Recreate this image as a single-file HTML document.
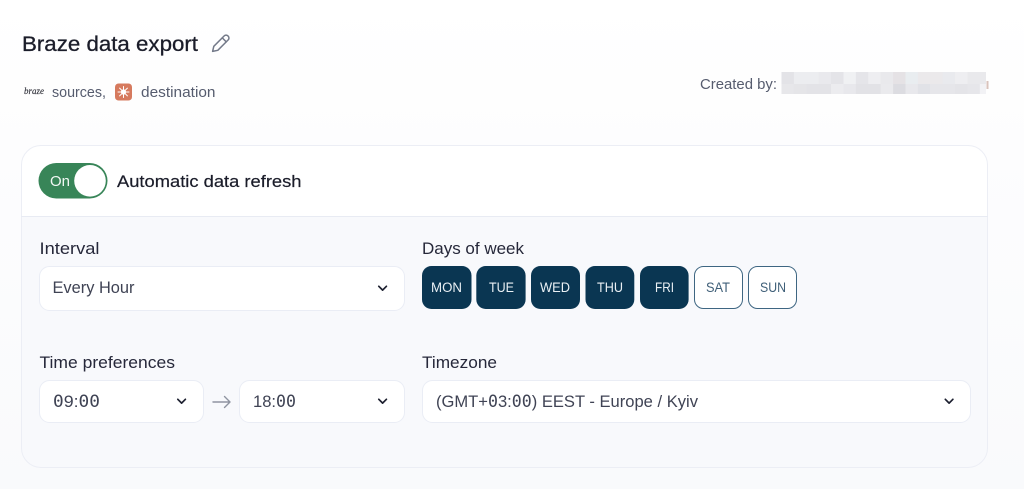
<!DOCTYPE html>
<html><head><meta charset="utf-8"><style>
html,body{margin:0;padding:0;width:1024px;height:489px;overflow:hidden;background:#fff}
svg{display:block}
text{font-family:"Liberation Sans",sans-serif}
.z{font-family:"DejaVu Sans Mono",monospace}
</style></head><body>
<svg width="1024" height="489" viewBox="0 0 1024 489" xmlns="http://www.w3.org/2000/svg">
<defs><linearGradient id="bg" x1="0" y1="0" x2="0" y2="1"><stop offset="0" stop-color="#fff"/><stop offset=".3" stop-color="#fdfdfe"/><stop offset="1" stop-color="#f9fafc"/></linearGradient></defs>
<rect width="1024" height="489" fill="url(#bg)"/>

<text x="22" y="51" font-size="21.5" fill="#1b1d2a" stroke="#1b1d2a" stroke-width=".3" textLength="176" lengthAdjust="spacingAndGlyphs">Braze data export</text>
<g fill="none" stroke="#737989" stroke-width="1.5" stroke-linejoin="round" stroke-linecap="round">
<path d="M212.6 51.4 L213.8 46.3 L224.2 35.9 A2.6 2.6 0 0 1 227.9 35.9 L228.2 36.2 A2.6 2.6 0 0 1 228.2 39.9 L217.8 50.3 Z"/>
<path d="M222.3 37.9 L226.2 41.8"/>
</g>

<text x="24" y="94" font-size="9.5" font-style="italic" fill="#33343c" style="font-family:'Liberation Serif',serif" stroke="#33343c" stroke-width=".15" textLength="20" lengthAdjust="spacingAndGlyphs">braze</text>
<text x="52" y="97" font-size="15" fill="#565c6e" textLength="54" lengthAdjust="spacingAndGlyphs">sources,</text>
<rect x="115" y="83.5" width="17" height="17" rx="3.5" fill="#d67a5e"/>
<g stroke="#fff" stroke-width="1" stroke-linecap="round">
<path d="M123.5 86.5V97.5M118 92H129M119.6 88.1L127.4 95.9M127.4 88.1L119.6 95.9"/>
</g>
<circle cx="123.5" cy="92" r="2.6" fill="#fff"/>
<text x="141" y="97" font-size="15" fill="#565c6e" textLength="74.5" lengthAdjust="spacingAndGlyphs">destination</text>

<text x="700" y="89" font-size="15" fill="#565c6e" textLength="77" lengthAdjust="spacingAndGlyphs">Created by:</text>
<g>
<rect x="781.5" y="72" width="204.5" height="22" fill="#e9e9ec"/>
<rect x="781.5" y="72" width="12.4" height="12" fill="#e3e3e7"/>
<rect x="793.9" y="72" width="24.8" height="12" fill="#ecedf0"/>
<rect x="818.7" y="72" width="12.4" height="12" fill="#e9e9ed"/>
<rect x="831.1" y="72" width="12.4" height="12" fill="#e4e4e8"/>
<rect x="843.5" y="72" width="12.4" height="12" fill="#f0f1f3"/>
<rect x="855.9" y="72" width="12.4" height="12" fill="#e5e5e9"/>
<rect x="868.3" y="72" width="12.4" height="12" fill="#eeeef1"/>
<rect x="880.7" y="72" width="12.4" height="12" fill="#e9e9ec"/>
<rect x="893.1" y="72" width="12.4" height="12" fill="#e5e2e5"/>
<rect x="905.5" y="72" width="12.4" height="12" fill="#e9edf0"/>
<rect x="917.9" y="72" width="24.8" height="12" fill="#ebe9eb"/>
<rect x="942.7" y="72" width="12.4" height="12" fill="#e9eaee"/>
<rect x="955.1" y="72" width="12.4" height="12" fill="#eeeef1"/>
<rect x="781.5" y="84" width="12.4" height="10" fill="#e7e7ea"/>
<rect x="793.9" y="84" width="12.4" height="10" fill="#e5e5e8"/>
<rect x="806.3" y="84" width="24.8" height="10" fill="#e3e3e7"/>
<rect x="831.1" y="84" width="12.4" height="10" fill="#ececef"/>
<rect x="843.5" y="84" width="12.4" height="10" fill="#e8e8ec"/>
<rect x="855.9" y="84" width="24.8" height="10" fill="#e2e2e6"/>
<rect x="880.7" y="84" width="12.4" height="10" fill="#eaeaed"/>
<rect x="893.1" y="84" width="12.4" height="10" fill="#dcdce1"/>
<rect x="905.5" y="84" width="12.4" height="10" fill="#e8e8ec"/>
<rect x="917.9" y="84" width="12.4" height="10" fill="#e1e2e7"/>
<rect x="930.3" y="84" width="24.8" height="10" fill="#e6e6ea"/>
<rect x="955.1" y="84" width="12.4" height="10" fill="#e4e4e8"/>
<rect x="967.5" y="84" width="12.4" height="10" fill="#e6e6ea"/>
<rect x="979.9" y="84" width="6.1" height="10" fill="#f2f2f5"/>
<rect x="986.5" y="81" width="2" height="8" fill="#c9a9a0" opacity=".7"/>
</g>

<path d="M21.5 216.5V165A19.5 19.5 0 0 1 41 145.5H968A19.5 19.5 0 0 1 987.5 165V216.5Z" fill="#fff"/>
<path d="M21.5 216.5V448A19.5 19.5 0 0 0 41 467.5H968A19.5 19.5 0 0 0 987.5 448V216.5Z" fill="#f8f9fc"/>
<rect x="21.5" y="145.5" width="966" height="322" rx="19.5" fill="none" stroke="#eceef5"/>
<path d="M21 216.5H988" stroke="#e8ebf3"/>

<rect x="38.5" y="163" width="69" height="35.5" rx="17.75" fill="#388558"/>
<circle cx="90" cy="180.8" r="15.8" fill="#fff"/>
<text x="50" y="186" font-size="15" fill="#f2f7f4" textLength="20" lengthAdjust="spacingAndGlyphs">On</text>
<text x="117" y="187" font-size="17" fill="#1b1d2a" stroke="#1b1d2a" stroke-width=".2" textLength="184.5" lengthAdjust="spacingAndGlyphs">Automatic data refresh</text>

<text x="39.5" y="254" font-size="17" fill="#26283a" textLength="60" lengthAdjust="spacingAndGlyphs">Interval</text>
<text x="422" y="254" font-size="17" fill="#26283a" textLength="102" lengthAdjust="spacingAndGlyphs">Days of week</text>
<text x="39.5" y="368" font-size="17" fill="#26283a" textLength="135.5" lengthAdjust="spacingAndGlyphs">Time preferences</text>
<text x="422" y="368" font-size="17" fill="#26283a" textLength="75" lengthAdjust="spacingAndGlyphs">Timezone</text>

<g fill="#fff" stroke="#eaedf5">
<rect x="39.5" y="266.5" width="365" height="44" rx="10"/>
<rect x="39.5" y="380.5" width="164" height="42" rx="10"/>
<rect x="239.5" y="380.5" width="165" height="42" rx="10"/>
<rect x="422.5" y="380.5" width="548" height="42" rx="10"/>
</g>
<text x="52.5" y="293" font-size="17" fill="#3f4354" textLength="82" lengthAdjust="spacingAndGlyphs">Every Hour</text>
<text x="53" y="407" font-size="17" fill="#3f4354" textLength="47" lengthAdjust="spacingAndGlyphs"><tspan class="z">0</tspan>9:<tspan class="z">00</tspan></text>
<text x="253" y="407" font-size="17" fill="#3f4354" textLength="43" lengthAdjust="spacingAndGlyphs">18:<tspan class="z">00</tspan></text>
<text x="436" y="407" font-size="17" fill="#3f4354" textLength="262" lengthAdjust="spacingAndGlyphs">(GMT+<tspan class="z">0</tspan>3:<tspan class="z">00</tspan>) EEST - Europe / Kyiv</text>

<g fill="none" stroke="#1d2030" stroke-width="1.7" stroke-linecap="round" stroke-linejoin="round">
<path d="M378.8 286.3L382.6 290.1L386.4 286.3"/>
<path d="M177.8 399.3L181.6 403.1L185.4 399.3"/>
<path d="M378.8 399.3L382.6 403.1L386.4 399.3"/>
<path d="M945.3 399.3L949.1 403.1L952.9 399.3"/>
</g>
<path d="M213 402H230M224.5 396.5L230 402L224.5 407.5" fill="none" stroke="#8f94a1" stroke-width="1.4" stroke-linecap="round" stroke-linejoin="round"/>

<g fill="#0a3652">
<rect x="422" y="266" width="49.5" height="43" rx="9.5"/>
<rect x="476.3" y="266" width="49.3" height="43" rx="9.5"/>
<rect x="531" y="266" width="49" height="43" rx="9.5"/>
<rect x="585.5" y="266" width="48.8" height="43" rx="9.5"/>
<rect x="640" y="266" width="48.6" height="43" rx="9.5"/>
</g>
<g fill="#fff" stroke="#3e6682">
<rect x="694.5" y="266.5" width="48" height="42" rx="9"/>
<rect x="748.5" y="266.5" width="48" height="42" rx="9"/>
</g>
<g font-size="13.5" fill="#eaf0f4">
<text x="431" y="292" textLength="31" lengthAdjust="spacingAndGlyphs">MON</text>
<text x="489" y="292" textLength="25" lengthAdjust="spacingAndGlyphs">TUE</text>
<text x="540" y="292" textLength="30" lengthAdjust="spacingAndGlyphs">WED</text>
<text x="597" y="292" textLength="26" lengthAdjust="spacingAndGlyphs">THU</text>
<text x="655" y="292" textLength="19" lengthAdjust="spacingAndGlyphs">FRI</text>
</g>
<g font-size="13.5" fill="#3f5f78">
<text x="706" y="292" textLength="24" lengthAdjust="spacingAndGlyphs">SAT</text>
<text x="760" y="292" textLength="26" lengthAdjust="spacingAndGlyphs">SUN</text>
</g>
</svg>
</body></html>
